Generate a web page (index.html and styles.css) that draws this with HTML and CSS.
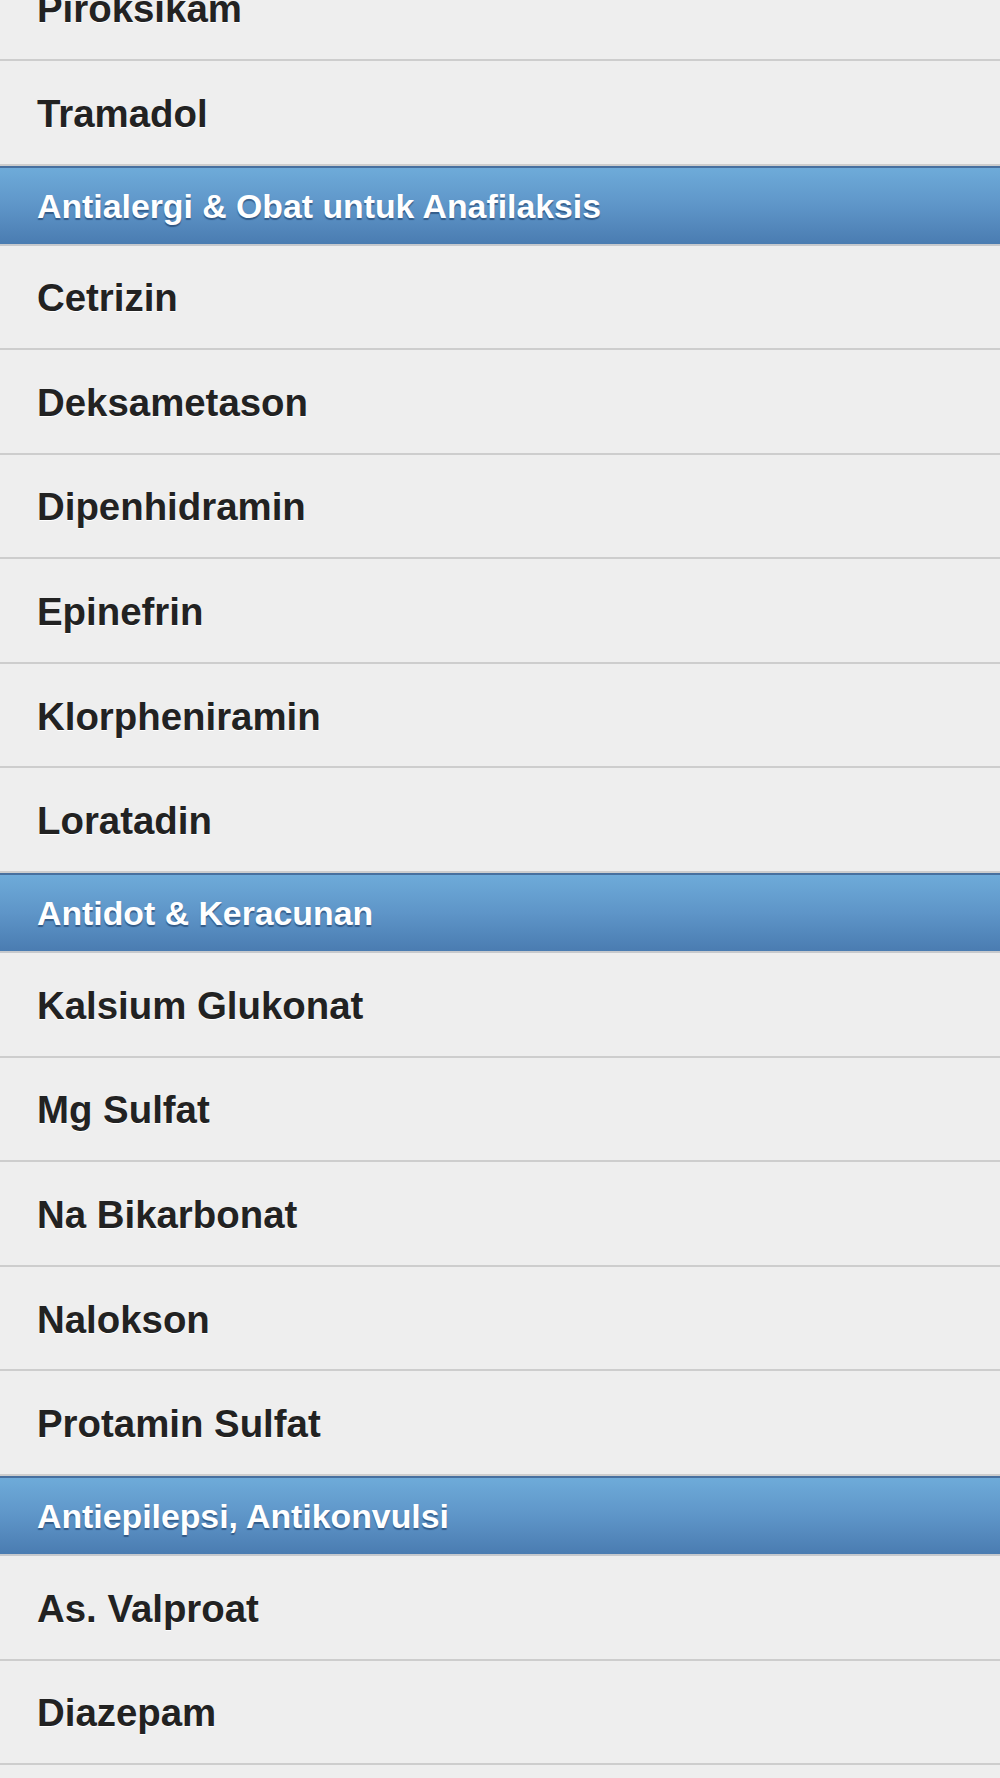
FILE: index.html
```html
<!DOCTYPE html>
<html lang="id">
<head>
<meta charset="UTF-8">
<meta name="viewport" content="width=device-width, initial-scale=1.0">
<title>Daftar Obat</title>
<link rel="stylesheet" href="styles.css">
</head>
<body>

<ul id="drug_list">
    <li class="item">Piroksikam</li>
    <li class="item">Tramadol</li>

    <li class="group">Antialergi &amp; Obat untuk Anafilaksis</li>
    <li class="item">Cetrizin</li>
    <li class="item">Deksametason</li>
    <li class="item">Dipenhidramin</li>
    <li class="item">Epinefrin</li>
    <li class="item">Klorpheniramin</li>
    <li class="item">Loratadin</li>

    <li class="group">Antidot &amp; Keracunan</li>
    <li class="item">Kalsium Glukonat</li>
    <li class="item">Mg Sulfat</li>
    <li class="item">Na Bikarbonat</li>
    <li class="item">Nalokson</li>
    <li class="item">Protamin Sulfat</li>

    <li class="group">Antiepilepsi, Antikonvulsi</li>
    <li class="item">As. Valproat</li>
    <li class="item">Diazepam</li>
</ul>

</body>
</html>
```

FILE: styles.css
```css
/* list page */
body {
    margin: 0;
    background-color: #eeeeee;
    font-family: "Liberation Sans", Arial, sans-serif;
    overflow: hidden;
}

#drug_list {
    list-style: none;
    margin: -43.7px 0 0 0;
    padding: 0;
}

/* a drug row */
.item {
    display: flex;
    align-items: center;
    box-sizing: border-box;
    height: 104.6px;
    padding: 3px 0 0 37px;
    border-bottom: 2px solid #cdcdcd;
    color: #222222;
    font-size: 38.4px;
    font-weight: bold;
    text-shadow: 0 1px 0 #ffffff;
}

/* blue category bar */
.group {
    display: flex;
    align-items: center;
    box-sizing: border-box;
    height: 80px;
    padding: 1px 0 0 37px;
    border-top: 2px solid #47709f;
    border-bottom: 2px solid #c6c9cd;
    background: linear-gradient(to bottom, #6eabd9 0%, #5e95c8 50%, #4a7cb1 100%);
    color: #ffffff;
    font-size: 33.8px;
    font-weight: bold;
    text-shadow: 0 2px 1px rgba(20, 50, 90, 0.55);
}
```
